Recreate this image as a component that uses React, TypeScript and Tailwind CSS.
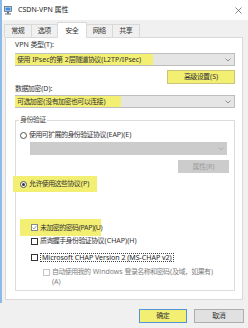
import React from "react";

// CJK glyphs in the original UI font run a bit narrower than Noto's;
// the last glyph of each run keeps normal spacing so gaps to Latin stay
const T = ({ children }: { children: string }) => (
  <>
    {children.split(/([\u3000-\u9fff\uff00-\uffef]+)/).map((p, i) =>
      i % 2 ? (
        <React.Fragment key={i}>
          <span className="tracking-[-0.6px]">{p.slice(0, -1)}</span>
          {p.slice(-1)}
        </React.Fragment>
      ) : (
        p
      )
    )}
  </>
);

const Chevron = ({ color = "#7a7a7a" }: { color?: string }) => (
  <svg width="6" height="4" viewBox="0 0 6 4" className="shrink-0">
    <path d="M0.5 0.5 L3 3 L5.5 0.5" fill="none" stroke={color} strokeWidth="0.8" />
  </svg>
);

const Radio = ({ checked }: { checked?: boolean }) => (
  <span className="w-[7px] h-[7px] rounded-full border border-[#555] bg-white flex items-center justify-center shrink-0">
    {checked && <span className="w-[3px] h-[3px] rounded-full bg-[#333]" />}
  </span>
);

const Check = ({ checked, disabled }: { checked?: boolean; disabled?: boolean }) => (
  <span
    className={`w-[7px] h-[7px] border bg-white flex items-center justify-center shrink-0 ${
      disabled ? "border-[#c4c4c4]" : checked ? "border-[#8a8a8a]" : "border-[#333]"
    }`}
  >
    {checked && (
      <svg width="5" height="5" viewBox="0 0 5 5">
        <path d="M0.6 2.6 L2 4 L4.5 0.9" fill="none" stroke="#8a8a8a" strokeWidth="0.8" />
      </svg>
    )}
  </span>
);

const tabs = ["常规", "选项", "安全", "网络", "共享"];
const tabWidths = ["w-[28px]", "w-[27px]", "w-[30px]", "w-[27px]", "w-[28px]"];

export default function App() {
  return (
    <div className="w-[248px] h-[328px] bg-[#f0f0f0] overflow-hidden text-[7px] leading-[8px] text-[#333] font-['Noto_Sans','Noto_Sans_CJK_SC',sans-serif]">
      <div className="h-[303px] border-l-2 border-[#8db9e6] flex flex-col">
        {/* title bar */}
        <div className="h-[20px] bg-white flex items-center shrink-0">
          <svg width="8" height="9" viewBox="0 0 8 9" className="ml-[2px]">
            <rect x="0.5" y="0.5" width="7" height="5" fill="#dfe8f2" stroke="#5a6b80" strokeWidth="0.8" />
            <rect x="1.5" y="1.5" width="5" height="3" fill="#3d8ee0" />
            <rect x="3" y="6" width="2" height="1.5" fill="#5a6b80" />
            <rect x="1" y="7.5" width="6" height="1" fill="#5a6b80" />
          </svg>
          <span className="ml-[6px] text-[#222]">CSDN-VPN 属性</span>
          <svg width="7" height="7" viewBox="0 0 7 7" className="ml-auto mr-[6px]">
            <path d="M0.5 0.5 L6.5 6.5 M6.5 0.5 L0.5 6.5" stroke="#555" strokeWidth="0.7" />
          </svg>
        </div>

        {/* tabs */}
        <div className="h-[17px] flex items-end pl-[2px] shrink-0">
          {tabs.map((t, i) =>
            i === 2 ? (
              <div
                key={t}
                className={`${tabWidths[i]} h-[16px] -mb-px -ml-px bg-white border border-b-0 border-[#d9d9d9] relative z-10 flex items-center justify-center`}
              >
                <T>{t}</T>
              </div>
            ) : (
              <div
                key={t}
                className={`${tabWidths[i]} h-[13px] ${i ? "-ml-px" : ""} bg-[#f0f0f0] border border-b-0 border-[#d9d9d9] flex items-center justify-center`}
              >
                <T>{t}</T>
              </div>
            )
          )}
        </div>

        {/* page */}
        <div className="ml-[3px] w-[238px] h-[263px] bg-white border border-[#d9d9d9] flex flex-col pl-[9px] pr-[7px] shrink-0">
          <div className="mt-[3px] h-[8px]">
            <T>VPN 类型(T):</T>
          </div>
          <div className="mt-[4px] h-[13px] flex items-center bg-[#e5e5e5] border border-[#bdbdbd]">
            <div className="h-full w-[138px] -ml-px bg-[#f3ef72] flex items-center pl-[2px] whitespace-nowrap">
              <T>使用 IPsec 的第 2 层隧道协议(L2TP/IPsec)</T>
            </div>
            <span className="ml-auto mr-[3px]">
              <Chevron />
            </span>
          </div>
          <div className="mt-[4px] self-end w-[68px] h-[14px] bg-[#f3ef72] border border-[#c9c478] flex items-center justify-center">
            <T>高级设置(S)</T>
          </div>
          <div className="mt-[1px] h-[8px]">
            <T>数据加密(D):</T>
          </div>
          <div className="mt-[2px] h-[13px] flex items-center bg-[#e5e5e5] border border-[#bdbdbd]">
            <div className="h-full w-[106px] -ml-px bg-[#f3ef72] flex items-center pl-[2px] whitespace-nowrap">
              <T>可选加密(没有加密也可以连接)</T>
            </div>
            <span className="ml-auto mr-[3px]">
              <Chevron />
            </span>
          </div>

          {/* 身份验证 group */}
          <div className="relative mt-[12px] h-[171px] border border-[#dcdcdc] flex flex-col">
            <span className="absolute -top-[5px] left-[3px] bg-white px-[1px] text-[#444]">
              <T>身份验证</T>
            </span>

            <div className="mt-[10px] h-[8px] pl-[4px] flex items-center gap-[2px] whitespace-nowrap">
              <Radio />
              <span>
                <T>使用可扩展的身份验证协议(EAP)(E)</T>
              </span>
            </div>
            <div className="mt-[3px] ml-[14px] w-[197px] h-[13px] bg-[#cccccc] flex items-center justify-end pr-[3px]">
              <Chevron color="#a8a8a8" />
            </div>
            <div className="mt-[5px] self-end mr-[5px] w-[51px] h-[13px] bg-[#cccccc] text-[#9c9c9c] flex items-center justify-center">
              <T>属性(R)</T>
            </div>

            <div className="mt-[3px] -ml-[3px] w-[84px] h-[16px] bg-[#f3ef72] pl-[7px] flex items-center gap-[2px] whitespace-nowrap">
              <Radio checked />
              <span>
                <T>允许使用这些协议(P)</T>
              </span>
            </div>

            <div className="mt-[27px] ml-[4px] w-[81px] h-[17px] bg-[#f3ef72] pl-[11px] flex items-center gap-[2px] whitespace-nowrap">
              <Check checked />
              <span className="tracking-[-0.3px]">
                <T>未加密的密码(PAP)(U)</T>
              </span>
            </div>
            <div className="mt-[1px] h-[8px] pl-[15px] flex items-center gap-[2px] whitespace-nowrap">
              <Check />
              <span>
                <T>质询握手身份验证协议(CHAP)(H)</T>
              </span>
            </div>
            <div className="mt-[8px] h-[8px] pl-[15px] flex items-center gap-[2px] whitespace-nowrap">
              <Check />
              <span className="border border-dotted border-[#444] px-[1px] leading-[7px] text-[#222]">
                Microsoft CHAP Version 2 (MS-CHAP v2)
              </span>
            </div>
            <div className="mt-[6px] pl-[27px] flex items-start gap-[2px] text-[#808080] leading-[10px] whitespace-nowrap">
              <span className="mt-[2px]">
                <Check disabled />
              </span>
              <span>
                <T>自动使用我的 Windows 登录名称和密码(及域，如果有)</T>
                <br />
                (A)
              </span>
            </div>
          </div>
        </div>
      </div>

      {/* dialog buttons */}
      <div className="mt-[6px] flex justify-end gap-[7px] pr-[4px]">
        <div className="w-[48px] h-[14px] bg-[#f3ef72] border border-[#4f95d8] flex items-center justify-center">
          <T>确定</T>
        </div>
        <div className="w-[50px] h-[14px] bg-[#e1e1e1] border border-[#adadad] flex items-center justify-center">
          <T>取消</T>
        </div>
      </div>
    </div>
  );
}
